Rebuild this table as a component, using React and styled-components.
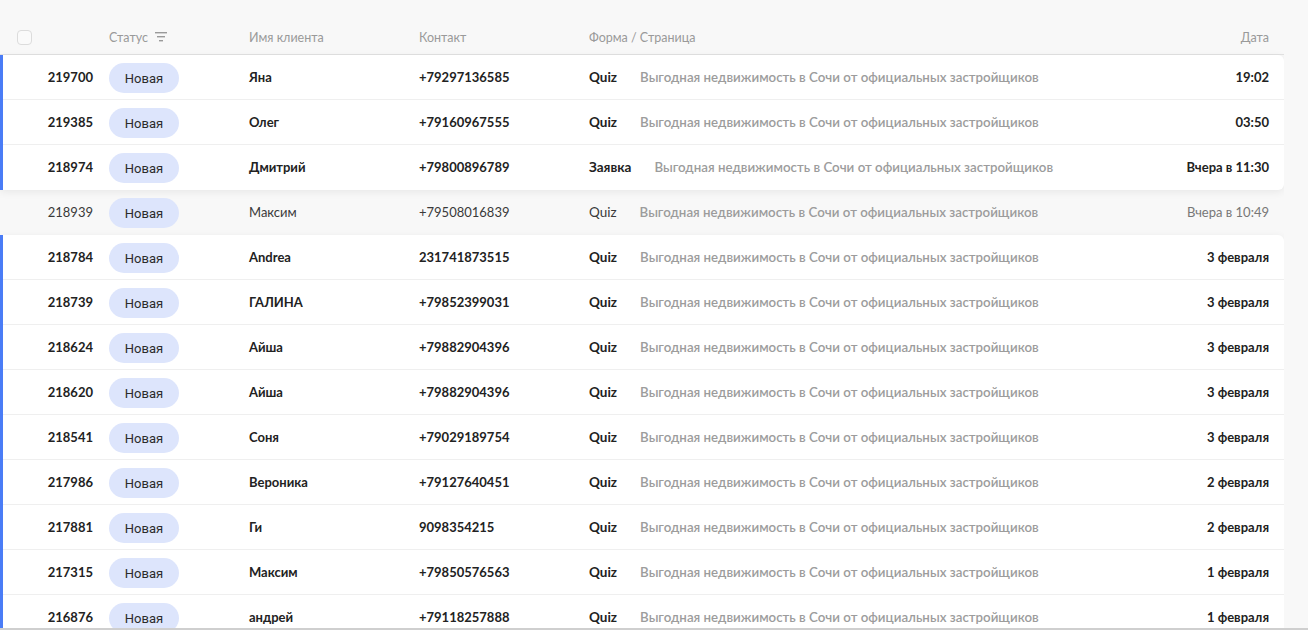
import styled, { createGlobalStyle } from "styled-components";

const GlobalStyle = createGlobalStyle`
  html, body {
    margin: 0;
    padding: 0;
    background: #f8f8f8;
    font-family: Lato, "Liberation Sans", sans-serif;
  }
`;

const Page = styled.div`
  height: 635px;
  display: flex;
  flex-direction: column;
  overflow: hidden;
  background: #f8f8f8;
`;

const Table = styled.div`
  width: 1284px;
  padding-top: 20px;
  flex: 1;
  overflow: hidden;
`;

const cols = (first) => `${first}px 140px 170px 170px 1fr auto`;

const Head = styled.div`
  display: grid;
  grid-template-columns: ${cols(109)};
  align-items: center;
  height: 34px;
  border-bottom: 1px solid #e2e2e2;
  font-size: 12.5px;
  color: #9a9a9a;
`;

const HeadCell = styled.div`
  display: flex;
  align-items: center;
  gap: 7px;
  padding-right: ${(p) => (p.$right ? "15px" : "0")};
  justify-content: ${(p) => (p.$right ? "flex-end" : "flex-start")};
`;

const Checkbox = styled.span`
  display: block;
  width: 13px;
  height: 13px;
  margin-left: 17px;
  border: 1px solid #dcdcdc;
  border-radius: 4px;
  background: #fafafa;
`;

const Card = styled.div`
  background: #fff;
  border-left: 3px solid #4a7cf6;
  border-radius: 0 6px 6px 0;
  box-shadow: 0 2px 8px rgba(0, 0, 0, 0.07);
`;

const Row = styled.div`
  display: grid;
  grid-template-columns: ${(p) => cols(p.$read ? 109 : 106)};
  align-items: center;
  height: 45px;
  box-sizing: border-box;
  border-bottom: 1px solid ${(p) => (p.$read ? "transparent" : "#efefef")};
  font-size: 13px;
  font-weight: ${(p) => (p.$read ? 400 : 700)};
  color: ${(p) => (p.$read ? "#3a3a3a" : "#222")};
  &:last-child {
    border-bottom-color: transparent;
  }
`;

const Id = styled.div`
  text-align: right;
  padding-right: 16px;
`;

const Pill = styled.span`
  display: inline-flex;
  align-items: center;
  justify-content: center;
  width: 70px;
  height: 30px;
  margin-top: 2px;
  border-radius: 15px;
  background: #dde5fc;
  color: #2b2b2b;
  font-family: Roboto, "Liberation Sans", sans-serif;
  font-weight: 400;
  font-size: 13px;
`;

const Form = styled.div`
  display: flex;
  align-items: center;
  white-space: nowrap;
  gap: 23px;
`;

const FormName = styled.span`
  font-size: 13.5px;
`;

const PageName = styled.span`
  color: #9c9c9c;
  font-weight: 600;
  font-size: 13.3px;
`;

const DateCell = styled.div`
  text-align: right;
  padding-right: 15px;
  white-space: nowrap;
  color: ${(p) => (p.$read ? "#777" : "#222")};
`;

const Footer = styled.div`
  height: 5px;
  border-top: 2px solid #cfcfcf;
  background: #fff;
`;

const page = "Выгодная недвижимость в Сочи от официальных застройщиков";

const groups = [
  [
    ["219700", "Яна", "+79297136585", "Quiz", "19:02"],
    ["219385", "Олег", "+79160967555", "Quiz", "03:50"],
    ["218974", "Дмитрий", "+79800896789", "Заявка", "Вчера в 11:30"],
  ],
  { read: ["218939", "Максим", "+79508016839", "Quiz", "Вчера в 10:49"] },
  [
    ["218784", "Andrea", "231741873515", "Quiz", "3 февраля"],
    ["218739", "ГАЛИНА", "+79852399031", "Quiz", "3 февраля"],
    ["218624", "Айша", "+79882904396", "Quiz", "3 февраля"],
    ["218620", "Айша", "+79882904396", "Quiz", "3 февраля"],
    ["218541", "Соня", "+79029189754", "Quiz", "3 февраля"],
    ["217986", "Вероника", "+79127640451", "Quiz", "2 февраля"],
    ["217881", "Ги", "9098354215", "Quiz", "2 февраля"],
    ["217315", "Максим", "+79850576563", "Quiz", "1 февраля"],
    ["216876", "андрей", "+79118257888", "Quiz", "1 февраля"],
  ],
];

const FilterIcon = () => (
  <svg width="12" height="10" viewBox="0 0 12 10">
    <rect x="0" y="0" width="12" height="1.4" fill="#9a9a9a" />
    <rect x="2" y="4" width="8" height="1.4" fill="#9a9a9a" />
    <rect x="4" y="8" width="4" height="1.4" fill="#9a9a9a" />
  </svg>
);

const Lead = ({ data, read }) => {
  const [id, name, contact, form, date] = data;
  return (
    <Row $read={read}>
      <Id>{id}</Id>
      <div>
        <Pill>Новая</Pill>
      </div>
      <div>{name}</div>
      <div>{contact}</div>
      <Form>
        <FormName>{form}</FormName>
        <PageName>{page}</PageName>
      </Form>
      <DateCell $read={read}>{date}</DateCell>
    </Row>
  );
};

export default function App() {
  return (
    <Page>
      <GlobalStyle />
      <Table>
        <Head>
          <HeadCell>
            <Checkbox />
          </HeadCell>
          <HeadCell>
            Статус <FilterIcon />
          </HeadCell>
          <HeadCell>Имя клиента</HeadCell>
          <HeadCell>Контакт</HeadCell>
          <HeadCell>Форма / Страница</HeadCell>
          <HeadCell $right>Дата</HeadCell>
        </Head>
        {groups.map((g, i) =>
          Array.isArray(g) ? (
            <Card key={i}>
              {g.map((r) => (
                <Lead key={r[0]} data={r} />
              ))}
            </Card>
          ) : (
            <Lead key={i} data={g.read} read />
          )
        )}
      </Table>
      <Footer />
    </Page>
  );
}
